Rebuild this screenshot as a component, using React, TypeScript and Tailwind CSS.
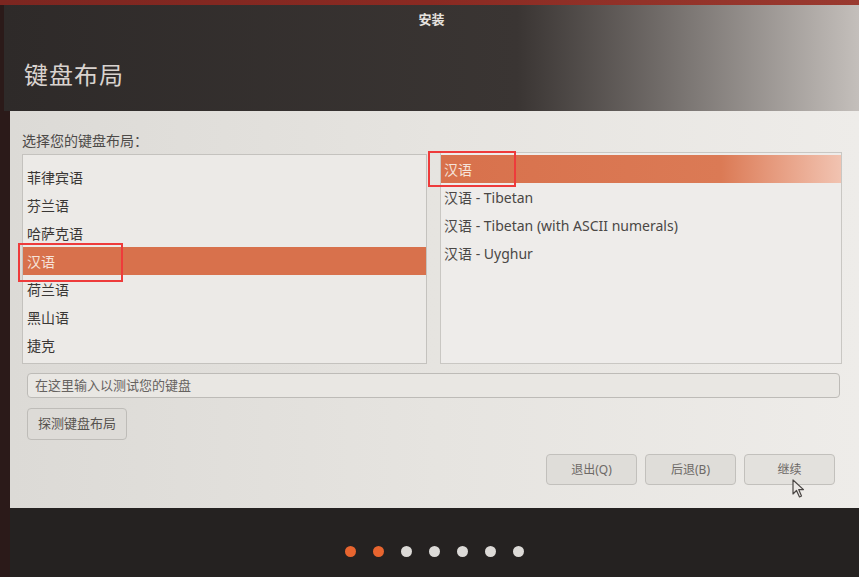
const font = "font-['Noto_Sans','Noto_Sans_CJK_SC',sans-serif]";

const leftItems = ["菲律宾语", "芬兰语", "哈萨克语", "汉语", "荷兰语", "黑山语", "捷克"];
const rightItems = ["汉语", "汉语 - Tibetan", "汉语 - Tibetan (with ASCII numerals)", "汉语 - Uyghur"];

function Cursor() {
  return (
    <svg className="absolute left-[792px] top-[479px]" width="14" height="20" viewBox="0 0 14 20" fill="none">
      <path d="M1 1 L1 15 L4.5 11.5 L7.5 18 L9.5 17 L6.7 10.6 L11.5 10.6 Z" fill="#ece9e6" stroke="#4a4644" strokeWidth="1.2" strokeLinejoin="round" />
    </svg>
  );
}

export default function App() {
  return (
    <div className={`relative flex h-[577px] w-[859px] flex-col overflow-hidden bg-[#2b1a19] ${font}`}>
      <div className="h-[5px] bg-linear-to-r from-[#7c2620] via-[#8a2a22] to-[#9a3a30]" />

      <header className="ml-[4px] flex h-[106px] flex-col bg-linear-to-r from-[#2e2a29] via-[#3a3533] via-60% to-[#c4bfbb] px-[20px]">
        <div className="mt-[5px] text-center text-[13px] font-bold text-[#e6e2df]">安装</div>
        <h1 className="mt-[33px] text-[24px] leading-none tracking-[1px] text-[#d9d3cf]">键盘布局</h1>
      </header>

      <main className="ml-[10px] flex h-[397px] flex-col bg-linear-to-r from-[#dcdad6] via-[#e6e4e0] to-[#eeece9] pl-[12px] pr-[17px] pt-[22px]">
        <p className="text-[14px] leading-[16px] text-[#4d4a48]">选择您的键盘布局：</p>

        <div className="mt-[5px] flex gap-[13px]">
          <div className="h-[210px] w-[405px] border border-[#c4c2be] bg-[#eceae7] pt-[8px]">
            {leftItems.map((item) => (
              <div
                key={item}
                className={`flex h-[28px] items-center px-[4px] text-[14px] ${
                  item === "汉语" ? "bg-[#d8714c] text-[#f6e3da]" : "text-[#3a3735]"
                }`}
              >
                {item}
              </div>
            ))}
          </div>

          <div className="-mt-[2px] h-[212px] w-[402px] border border-[#c9c7c3] bg-[#eeecea] pt-[2px]">
            {rightItems.map((item, index) => (
              <div
                key={item}
                className={`flex h-[28px] items-center px-[3px] text-[14px] ${
                  index === 0
                    ? "bg-linear-to-r from-[#d8714c] via-[#db7a55] via-70% to-[#f1c3b1] text-[#f6e3da]"
                    : "text-[#4a4745]"
                }`}
              >
                {item}
              </div>
            ))}
          </div>
        </div>

        <div className="ml-[5px] mt-[9px] flex h-[25px] w-[813px] items-center rounded-[4px] border border-[#bdbbb7] bg-[#e9e7e3] px-[7px] text-[13px] text-[#66625f]">
          在这里输入以测试您的键盘
        </div>

        <button className="ml-[5px] mt-[10px] flex h-[32px] w-[100px] items-center justify-center rounded-[4px] border border-[#bebcb8] bg-[#dddbd7] text-[13px] text-[#57534f]">
          探测键盘布局
        </button>

        <div className="mt-[14px] flex justify-end gap-[8px] pr-[7px]">
          <button className="h-[31px] w-[91px] rounded-[4px] border border-[#c2c0bc] bg-[#dfddd9] text-[12px] text-[#6d6966]">退出(Q)</button>
          <button className="h-[31px] w-[91px] rounded-[4px] border border-[#c2c0bc] bg-[#dfddd9] text-[12px] text-[#6d6966]">后退(B)</button>
          <button className="h-[31px] w-[91px] rounded-[4px] border border-[#c2c0bc] bg-[#e3e1dd] text-[12px] text-[#6d6966]">继续</button>
        </div>
      </main>

      <footer className="ml-[10px] flex flex-1 items-center justify-center gap-[17px] bg-[#252221] pt-[18px]">
        <span className="h-[11px] w-[11px] rounded-full bg-[#e8652f]" />
        <span className="h-[11px] w-[11px] rounded-full bg-[#e8652f]" />
        <span className="h-[11px] w-[11px] rounded-full bg-[#dcdad7]" />
        <span className="h-[11px] w-[11px] rounded-full bg-[#dcdad7]" />
        <span className="h-[11px] w-[11px] rounded-full bg-[#dcdad7]" />
        <span className="h-[11px] w-[11px] rounded-full bg-[#dcdad7]" />
        <span className="h-[11px] w-[11px] rounded-full bg-[#dcdad7]" />
      </footer>

      <div className="absolute left-[18px] top-[243px] h-[39px] w-[105px] border-2 border-[#ee3b3b]" />
      <div className="absolute left-[428px] top-[151px] h-[36px] w-[88px] border-2 border-[#ee3b3b]" />
      <Cursor />
    </div>
  );
}
